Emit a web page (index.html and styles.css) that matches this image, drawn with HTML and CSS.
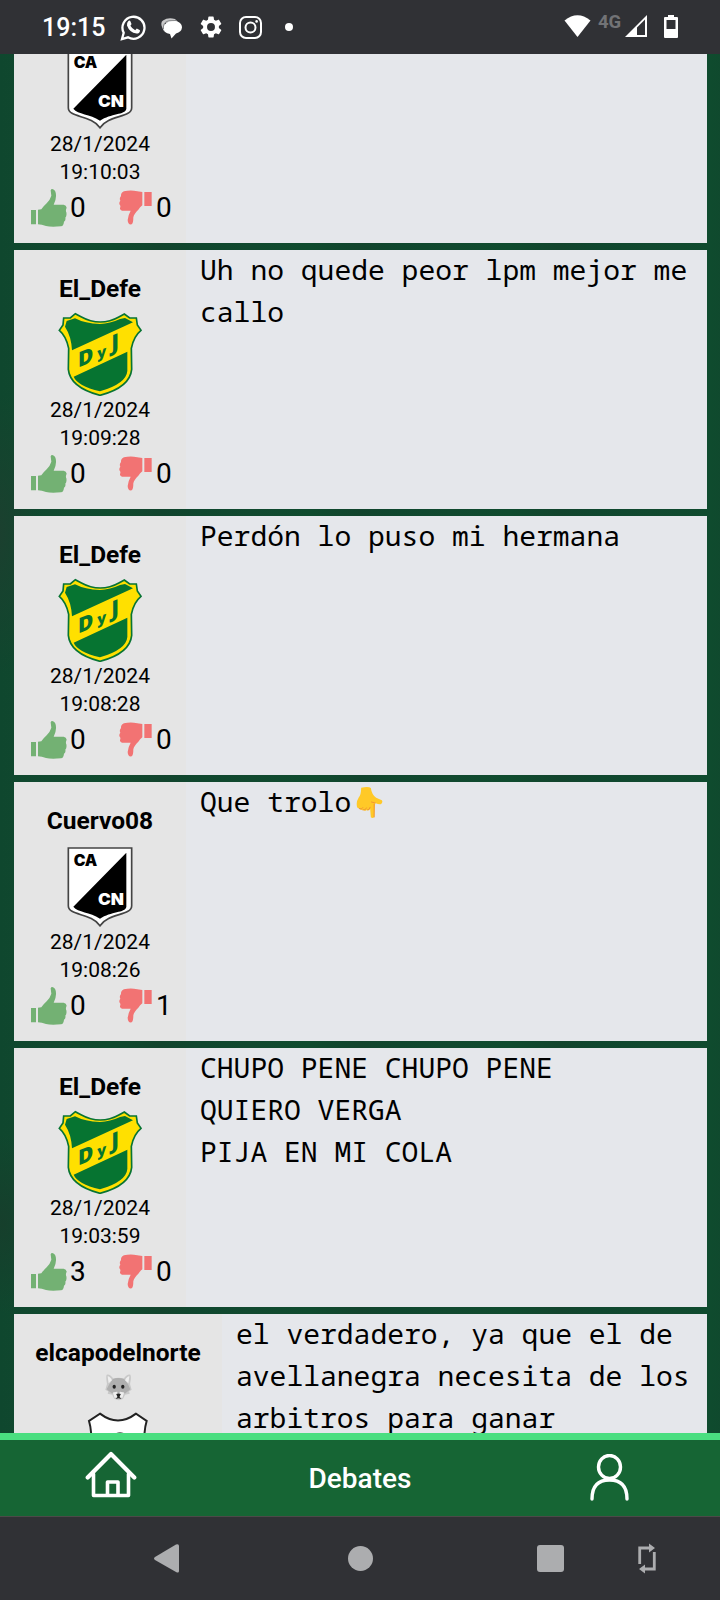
FILE: index.html
```html
<!DOCTYPE html>
<html lang="es">
<head>
<meta charset="utf-8">
<title>Debates</title>
<link rel="stylesheet" href="styles.css">
</head>
<body>
<svg class="defs" width="0" height="0" aria-hidden="true">
  <symbol id="up" viewBox="0 0 108 114">
    <path d="M0 63h15v43H0zM21 62L31 61Q38 51 47 43Q58 31 61 20L59 4Q60 0 64 0Q76 3 75 22Q75 34 68 47H98Q106 48 107 56Q103 64 106 70Q108 80 103 86Q105 95 99 98Q98 110 90 112Q60 115 45 111Q32 106 21 106Z"/>
  </symbol>
  <symbol id="down" viewBox="0 0 99 108">
    <path d="M76 6h22v42H76zM70 6V46Q63 51 58 59Q45 71 43 82Q43 100 38 103Q27 106 26 90Q27 76 35 62H9Q2 60 3 54Q6 48 2 44Q-1 38 4 32Q0 25 6 18Q5 8 15 4Q35 -1 55 4Z"/>
  </symbol>
  <symbol id="defensa" viewBox="24 21 252 252">
    <path fill="#ffe000" stroke="#087433" stroke-width="5" d="M76 26L93 35Q151 67 208 35L223 27L239 39H259L262 60L273 76Q251 94 244 130L245 193Q240 247 150 271Q60 247 55 193L56 130Q49 94 28 76L39 60L41 39H61Z"/>
    <path fill="#067431" d="M45 65L50 48L75 40Q105 56 150 57Q180 56 210 42L225 39L249 52L66 136Q64 94 45 65ZM232 140V198Q229 236 150 259Q82 242 71 215Z"/>
    <g class="crest-green"><text class="crest-letters" transform="translate(84 188) skewY(-23)" font-size="63">D</text><text class="crest-letters" transform="translate(142 162) skewY(-20)" font-size="44">y</text><text class="crest-letters" transform="translate(184 139) skewY(-20)" font-size="66">J</text></g>
  </symbol>
  <symbol id="central" viewBox="174 192 252 252">
    <path fill="#fff" stroke="#444" stroke-width="5" d="M205 204H395V377C395 408 326 398 300 437C273 398 205 408 205 377Z"/>
    <path d="M379 218V381C375 399 333 394 300 416C270 395 234 398 220 380Z"/>
    <text class="crest-wide" x="221" y="258" font-size="46" textLength="71" lengthAdjust="spacingAndGlyphs">CA</text>
    <text class="crest-wide" fill="#fff" x="294" y="376" font-size="48" textLength="78" lengthAdjust="spacingAndGlyphs">CN</text>
  </symbol>
</svg>

<div class="screen">
  <header class="status">
    <span class="clock">19:15</span>
    <svg class="s-wa" width="26" height="27" viewBox="0 0 26 27" fill="none" stroke="#fff"><path stroke-width="2.3" d="M2 25L3.7 18.8A11 11 0 1 1 8 23.3Z"/><path fill="#fff" stroke="none" d="M8.2 7.2Q9.8 5.8 10.5 7.4L11.5 10Q11.4 10.8 10.4 11.8Q12.2 15 15.2 16.2L16.8 14.6L20 16.2Q20 19.5 16.5 19.6Q9.5 18.5 7 11.4Q6.8 8.7 8.2 7.2Z"/></svg>
    <svg class="s-chat" width="21" height="21" viewBox="0 0 21 21"><path fill="#c9c9ca" d="M3.500 14Q-2 5 2 2.500Q7-1 14 1L17 4L11 4L4 5Z"/><path fill="#fff" d="M11 3C17 2.500 21 5 21 9.500Q20.500 14 15 15.500L10.500 20.500L9 16Q2.500 15 2.500 9.500Q4 3.500 11 3Z"/><path fill="none" stroke="#77787b" stroke-width=".8" d="M2.500 11Q1.500 4 8 2.700L15 2.500"/></svg>
    <svg class="s-gear" width="22" height="22" viewBox="2 2 20 20"><path fill="#fff" d="M19.14 12.94c.04-.3.06-.61.06-.94s-.02-.64-.07-.94l2.03-1.58a.49.49 0 0 0 .12-.61l-1.92-3.32a.49.49 0 0 0-.59-.22l-2.39.96a7 7 0 0 0-1.62-.94L14.4 2.81a.48.48 0 0 0-.48-.41h-3.84a.47.47 0 0 0-.47.41L9.25 5.35a7.2 7.2 0 0 0-1.62.94l-2.39-.96a.48.48 0 0 0-.59.22L2.74 8.87a.48.48 0 0 0 .12.61l2.03 1.58a6 6 0 0 0 0 1.88l-2.03 1.58a.49.49 0 0 0-.12.61l1.92 3.32c.12.22.37.29.59.22l2.39-.96c.5.38 1.03.7 1.62.94l.36 2.54c.05.24.24.41.48.41h3.84c.24 0 .44-.17.47-.41l.36-2.54a7 7 0 0 0 1.62-.94l2.39.96c.22.08.47 0 .59-.22l1.92-3.32a.47.47 0 0 0-.12-.61zM12 15.6A3.6 3.6 0 1 1 12 8.4a3.6 3.6 0 0 1 0 7.2z"/></svg>
    <svg class="s-ig" width="23" height="23" viewBox="0 0 23 23" fill="none" stroke="#fff" stroke-width="2"><rect x="1" y="1" width="21" height="21" rx="6"/><circle cx="11.5" cy="11.5" r="5"/><circle cx="17.6" cy="5.4" r="1.3" fill="#fff" stroke="none"/></svg>
    <span class="more-dot"></span>
    <svg class="s-wifi" width="27" height="22" viewBox="0 0 27 22"><path fill="#fff" d="M.5 5.5Q13.5-5 26.5 5.5L13.5 22Z"/></svg>
    <span class="network">4G</span>
    <svg class="s-signal" width="22" height="22" viewBox="0 0 22 22"><path fill="#fff" fill-rule="evenodd" d="M0 22L22 0V22ZM12 12.5V20H20V4.5Z"/></svg>
    <svg class="s-battery" width="14" height="23" viewBox="0 0 14 23"><path fill="#fff" fill-rule="evenodd" d="M4 0h6v2h3q1 0 1 1v19q0 1-1 1H1q-1 0-1-1V3q0-1 1-1h3zM2.5 5v9h9V5z"/></svg>
  </header>

  <main class="feed">
    <div class="posts">
      <article class="post">
        <aside class="author"><div class="name">Cuervo08</div><svg class="crest"><use href="#central"/></svg><time>28/1/2024<br>19:10:03</time><div class="votes"><svg class="up"><use href="#up"/></svg><span>0</span><svg class="down"><use href="#down"/></svg><span>0</span></div></aside>
        <p class="message"></p>
      </article>
      <article class="post">
        <aside class="author"><div class="name">El_Defe</div><svg class="crest"><use href="#defensa"/></svg><time>28/1/2024<br>19:09:28</time><div class="votes"><svg class="up"><use href="#up"/></svg><span>0</span><svg class="down"><use href="#down"/></svg><span>0</span></div></aside>
        <p class="message">Uh no quede peor lpm mejor me
callo</p>
      </article>
      <article class="post">
        <aside class="author"><div class="name">El_Defe</div><svg class="crest"><use href="#defensa"/></svg><time>28/1/2024<br>19:08:28</time><div class="votes"><svg class="up"><use href="#up"/></svg><span>0</span><svg class="down"><use href="#down"/></svg><span>0</span></div></aside>
        <p class="message">Perdón lo puso mi hermana</p>
      </article>
      <article class="post">
        <aside class="author"><div class="name">Cuervo08</div><svg class="crest"><use href="#central"/></svg><time>28/1/2024<br>19:08:26</time><div class="votes"><svg class="up"><use href="#up"/></svg><span>0</span><svg class="down"><use href="#down"/></svg><span>1</span></div></aside>
        <p class="message">Que trolo<svg class="hand" viewBox="0 0 80 96"><path fill="#ffc927" d="M15 2Q38-2 44 3Q47 24 60 32L77 40Q81 45 75 51Q69 53 57 48L54 90Q50 96 44 91L42 66Q39 73 32 69Q27 74 20 68Q12 71 9 64Q1 64 2 55Q0 44 8 31Q15 22 15 2Z"/><path fill="none" stroke="#f19534" stroke-width="3" stroke-linecap="round" d="M42 61Q40 69 34 69M31 63Q29 71 20 69M20 62Q17 69 9 65M57 48L46 45M54 52V90"/></svg></p>
      </article>
      <article class="post">
        <aside class="author"><div class="name">El_Defe</div><svg class="crest"><use href="#defensa"/></svg><time>28/1/2024<br>19:03:59</time><div class="votes"><svg class="up"><use href="#up"/></svg><span>3</span><svg class="down"><use href="#down"/></svg><span>0</span></div></aside>
        <p class="message">CHUPO PENE CHUPO PENE
QUIERO VERGA
PIJA EN MI COLA</p>
      </article>
      <article class="post">
        <aside class="author wide"><div class="name">elcapodelnorte<br><svg class="wolf" viewBox="0 0 82 82"><path fill="#c9c9c9" d="M5 2Q14-2 25 14Q40 9 57 14Q68-2 77 2Q81 9 76 30L81 48L73 53L75 60L61 63L55 75Q42 84 28 75L22 63L8 60L10 53L1 48L6 30Q2 9 5 2Z"/><path fill="#afafaf" d="M24 15Q40 10 58 15L70 31L77 46L61 59L46 54L41 60L36 54L21 59L5 46L13 31Z"/><path fill="#eee" d="M8 7Q16 8 21 19L11 28ZM74 7Q66 8 61 19L71 28ZM24 56L37 54V71L29 72ZM45 54L58 56L53 72L45 71Z"/><g fill="#222"><ellipse cx="28" cy="39" rx="5" ry="6"/><ellipse cx="54" cy="39" rx="5" ry="6"/><path d="M34 61Q41 58 48 61L44 70L50 76L41 74L32 76L38 70Z"/></g></svg></div><svg class="crest" viewBox="228 336 252 252"><path fill="#fff" stroke="#222" stroke-width="6" d="M300 341Q354 382 408 341L440 363Q434 382 433 410V500Q430 550 354 580Q278 550 275 500L274 410Q273 382 267 363Z"/><circle cx="360" cy="420" r="21" fill="none" stroke="#444" stroke-width="5"/></svg></aside>
        <p class="message">el verdadero, ya que el de
avellanegra necesita de los
arbitros para ganar</p>
      </article>
    </div>
  </main>

  <nav class="tabs">
    <a class="tab"><svg class="home" width="52" height="48" viewBox="0 0 52 48" fill="none" stroke="#fff" stroke-width="4.2" stroke-linecap="round" stroke-linejoin="round"><path d="M2.7 26.5L26 3L49.3 26.5"/><path stroke-width="3.6" d="M8.5 23V44.500H43.500V23M22.500 44V31H33V44"/></svg></a>
    <a class="tab">Debates</a>
    <a class="tab"><svg class="person" width="39" height="47" viewBox="0 0 39 47" fill="none" stroke="#fff" stroke-width="3.4" stroke-linecap="round"><ellipse cx="19.5" cy="13" rx="11" ry="11.5"/><path d="M2 45Q2 26 19.500 26Q37 26 37 45"/></svg></a>
  </nav>

  <footer class="system">
    <svg class="back" width="25" height="29" viewBox="0 0 25 29"><path fill="#acadaf" d="M1 13L22 .5Q25-.5 25 2V27Q25 29.5 22 28L1 16Q-1 14.5 1 13Z"/></svg>
    <span class="home-dot"></span>
    <span class="recents"></span>
    <svg class="rotate" width="18" height="31" viewBox="0 0 18 31" fill="none" stroke="#acadaf" stroke-width="2.8"><path d="M1.700 21V5H12M16.300 9V26H6"/><path fill="#acadaf" stroke="none" d="M11 .5L17 5L11 9.500ZM7 21.500L1 26L7 30.500Z"/></svg>
  </footer>
</div>
</body>
</html>
```

FILE: styles.css
```css
* { box-sizing: border-box; }
body { margin: 0; background: #303135; font-family: Roboto, sans-serif; color: #000; }
svg { display: block; flex: none; }
.defs { position: absolute; }
.screen { width: 720px; height: 1600px; display: flex; flex-direction: column; overflow: hidden; }

.status { flex: none; height: 54px; background: #303135; display: flex; align-items: center; padding: 0 42px 0 42px; }
.clock { color: #fff; font-size: 25px; font-weight: 500; width: 64px; line-height: 30px; margin-top: 2px; }
.s-wa { margin-left: 14px; }
.s-chat { margin: 2px 0 0 15px; }
.s-gear { margin-left: 18px; }
.s-ig { margin-left: 17px; }
.more-dot { width: 8px; height: 8px; border-radius: 50%; background: #fff; margin-left: 23px; }
.s-wifi { margin: -2px 0 0 auto; }
.network { color: #727376; font-size: 18.5px; font-weight: 700; line-height: 20px; width: 24px; margin: -10px 0 0 7px; }
.s-signal { margin: -2px 0 0 3px; }
.s-battery { margin: -1px 0 0 17px; }

.feed {
  flex: none; height: 1379px; overflow: hidden; padding: 0 13px 0 14px;
  background:
    radial-gradient(ellipse 40px 90px at 3px 1170px, #163f2c 0, transparent 100%),
    radial-gradient(ellipse 40px 140px at 0 480px, #1b402f 0, transparent 100%),
    repeating-linear-gradient(90deg, #0f472e 0, #11492f 50px, #0f4b2e 110px, #12442d 160px, #0f472e 200px);
}
.posts { margin-top: -70px; display: flex; flex-direction: column; gap: 7px; }
.post { height: 259px; background: #e5e7eb; display: flex; overflow: hidden; }
.author { flex: none; width: 172px; background: #e5e5e5; padding-top: 21px; display: flex; flex-direction: column; align-items: center; }
.wide { width: 208px; }
.name { font-size: 24.5px; font-weight: 700; line-height: 36px; text-align: center; margin-bottom: 5px; }
.crest { width: 84px; height: 84px; }
.crest-green { fill: #067431; }
.crest-letters { font-family: "Open Sans", sans-serif; font-weight: 800; }
.crest-wide { font-family: Inter, "Liberation Sans", sans-serif; font-weight: 900; }
.author time { font-size: 21px; font-weight: 440; line-height: 28px; text-align: center; }
.votes { align-self: stretch; display: flex; align-items: center; height: 42px; padding-left: 17px; font-size: 28px; font-weight: 450; }
.up { width: 36px; height: 38px; fill: #73b173; margin: 2px 3px 0 0; }
.down { width: 33px; height: 36px; fill: #f27373; margin: 2px 4px 0 33px; }
.votes span { width: 16px; }
.message { margin: -2px 0 0; padding-left: 14px; white-space: pre; font-family: "Noto Sans Mono", "DejaVu Sans Mono", monospace; font-size: 28px; font-weight: 370; line-height: 42px; }
.hand { display: inline-block; width: 27px; height: 32px; margin-left: 5px; vertical-align: -7px; }
.wolf { width: 27px; height: 27px; margin: 3px auto 6px; }

.tabs { flex: none; height: 84px; border-top: 7px solid #4ade80; border-bottom: 1px solid #4b4a48; background: #166534; display: grid; grid-template-columns: 222px 1fr 222px; align-items: center; }
.tab { color: #fff; font-size: 28px; font-weight: 500; text-align: center; }
.home { margin: -7px 0 0 85px; }
.person { margin: -1px 0 0 92px; }

.system { flex: none; height: 83px; display: flex; align-items: center; padding-left: 154px; }
.home-dot { width: 25px; height: 25px; border-radius: 50%; background: #acadaf; margin-left: 169px; }
.recents { width: 27px; height: 27px; border-radius: 3px; background: #acadaf; margin-left: 164px; }
.rotate { margin-left: 74px; }
```
